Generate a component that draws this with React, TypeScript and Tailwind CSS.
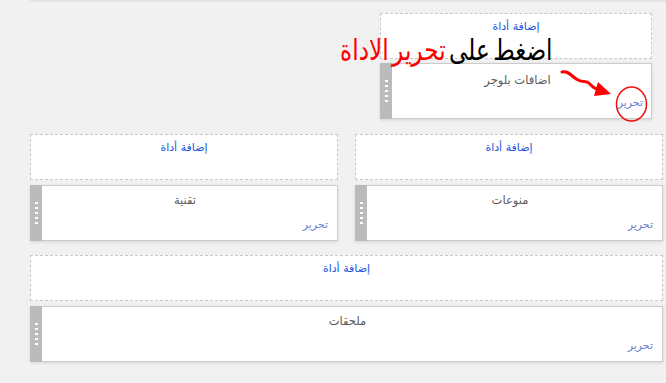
import React from "react";

const font = { fontFamily: '"DejaVu Sans", "Liberation Sans", sans-serif' };

function AddBox({ className = "" }: { className?: string }) {
  return (
    <div
      className={`h-[46px] border border-dashed border-[#c8c8c8] bg-white flex justify-center pt-[5px] ${className}`}
    >
      <span dir="rtl" className="text-[11px] leading-[16px] text-[#2255dd]">
        إضافة أداة
      </span>
    </div>
  );
}

function Widget({
  title,
  titleTop = "pt-[6px]",
  editRight = "pr-[9px]",
}: {
  title: string;
  titleTop?: string;
  editRight?: string;
}) {
  return (
    <div className="h-[56px] border border-[#cccccc] bg-white flex shadow-[0_1px_3px_rgba(0,0,0,0.12)]">
      <div className="w-[12px] -my-px -ml-px bg-[#bbbbbb] flex flex-col items-center justify-center gap-[3px] pl-px">
        {[0, 1, 2, 3, 4].map((i) => (
          <span key={i} className="block w-[3px] h-[2px] bg-white" />
        ))}
      </div>
      <div className={`flex-1 flex flex-col ${titleTop} ${editRight}`}>
        <div dir="rtl" className="text-center text-[11.5px] leading-[16px] text-[#5a5a5a]">
          {title}
        </div>
        <div dir="rtl" className="mt-auto mb-[8px] text-right text-[11px] leading-[14px] text-[#6b7fd0]">
          تحرير
        </div>
      </div>
    </div>
  );
}

function Section({ title, className = "" }: { title: string; className?: string }) {
  return (
    <div className={`flex flex-col gap-[5px] ${className}`}>
      <AddBox />
      <Widget title={title} />
    </div>
  );
}

export default function App() {
  return (
    <div style={font} className="relative w-[666px] h-[383px] overflow-hidden bg-[#f1f1f1]">
      {/* edge of the card above */}
      <div className="ml-[30px] -mt-[10px] h-[10px] bg-[#f1f1f1] shadow-[0_1px_2px_rgba(0,0,0,0.1)]" />

      <div className="pl-[380px] pt-[13px]">
        <div className="w-[272px] flex flex-col gap-[4px]">
          <AddBox />
          <Widget title="اضافات بلوجر" titleTop="pt-[8px]" editRight="pr-[8px]" />
        </div>
      </div>

      <div className="flex pl-[30px] pt-[15px] gap-[17px]">
        <Section title="تقنية" className="w-[308px]" />
        <Section title="منوعات" className="w-[308px]" />
      </div>

      <div className="pl-[30px] pt-[14px]">
        <Section title="ملحقات" className="w-[633px]" />
      </div>

      {/* annotation */}
      <div
        dir="rtl"
        className="absolute right-[113px] top-[33px] origin-right scale-x-[0.8] whitespace-nowrap text-[29px] leading-[34px] text-black [word-spacing:-5px]"
      >
        اضغط على <span className="text-[#ff0000]">تحرير الاداة</span>
      </div>
      <svg className="absolute left-0 top-0" width="666" height="383" viewBox="0 0 666 383">
        <path
          d="M562 72 C568 70 572 77 578 80 C584 83 586 80 590 84 C593 87 594 89 598 89"
          fill="none"
          stroke="#ff0000"
          strokeWidth="3"
          strokeLinecap="round"
        />
        <polygon points="598,82 611,94 594,96" fill="#ff0000" />
        <ellipse cx="631.5" cy="104" rx="15" ry="17" fill="none" stroke="#ee1111" strokeWidth="1.5" />
      </svg>
    </div>
  );
}
